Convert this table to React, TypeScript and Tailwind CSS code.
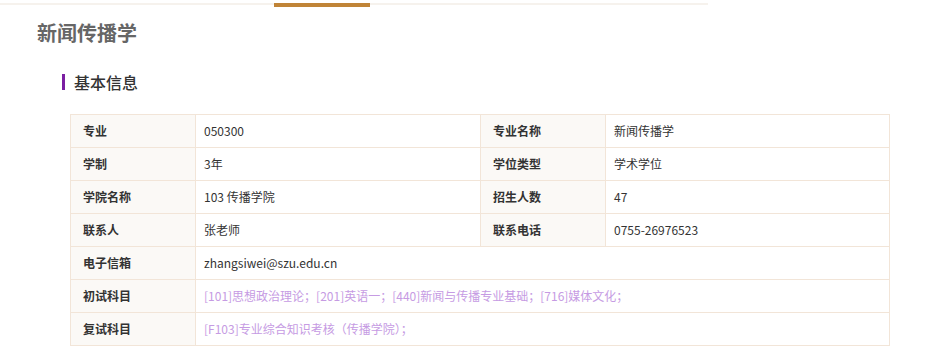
import React from "react";

const L = "bg-[#fbf9f6] border border-[#f2e5d8] pl-[12px] font-bold text-[#333] text-[12px]";
const V = "bg-white border border-[#f2e5d8] pl-[8px] text-[#333] text-[12px]";

export default function App() {
  return (
    <div className="w-[928px] h-[362px] bg-white overflow-hidden" style={{ fontFamily: '"Noto Sans CJK SC", "Microsoft YaHei", sans-serif' }}>
      <div className="relative w-[708px] h-[5px]">
        <div className="mt-[3px] h-[2px] bg-[#f6f2ed]" />
        <div className="absolute left-[274px] top-0 w-[96px] h-[4px] bg-[#c08437]" />
      </div>
      <h1 className="ml-[37px] mt-[11px] text-[20px] leading-[28px] font-bold text-[#666]">新闻传播学</h1>
      <div className="ml-[62px] mt-[23px] flex items-center h-[24px]">
        <div className="w-[3px] h-[16px] bg-[#7b1fa2]" />
        <span className="ml-[9px] text-[16px] leading-[24px] text-[#333] font-medium">基本信息</span>
      </div>
      <table className="ml-[70px] mt-[20px] border-collapse w-[819px] table-fixed">
        <colgroup>
          <col className="w-[125px]" />
          <col className="w-[285px]" />
          <col className="w-[125px]" />
          <col className="w-[284px]" />
        </colgroup>
        <tbody>
          <tr className="h-[33px]">
            <td className={L}>专业</td>
            <td className={V}>050300</td>
            <td className={L}>专业名称</td>
            <td className={V}>新闻传播学</td>
          </tr>
          <tr className="h-[33px]">
            <td className={L}>学制</td>
            <td className={V}>3年</td>
            <td className={L}>学位类型</td>
            <td className={V}>学术学位</td>
          </tr>
          <tr className="h-[33px]">
            <td className={L}>学院名称</td>
            <td className={V}>103 传播学院</td>
            <td className={L}>招生人数</td>
            <td className={V}>47</td>
          </tr>
          <tr className="h-[33px]">
            <td className={L}>联系人</td>
            <td className={V}>张老师</td>
            <td className={L}>联系电话</td>
            <td className={V}>0755-26976523</td>
          </tr>
          <tr className="h-[33px]">
            <td className={L}>电子信箱</td>
            <td className={V} colSpan={3}>zhangsiwei@szu.edu.cn</td>
          </tr>
          <tr className="h-[33px]">
            <td className={L}>初试科目</td>
            <td className={V + " !text-[#c69be3]"} colSpan={3}>[101]思想政治理论；[201]英语一；[440]新闻与传播专业基础；[716]媒体文化；</td>
          </tr>
          <tr className="h-[33px]">
            <td className={L}>复试科目</td>
            <td className={V + " !text-[#c69be3]"} colSpan={3}>[F103]专业综合知识考核（传播学院）；</td>
          </tr>
        </tbody>
      </table>
    </div>
  );
}
